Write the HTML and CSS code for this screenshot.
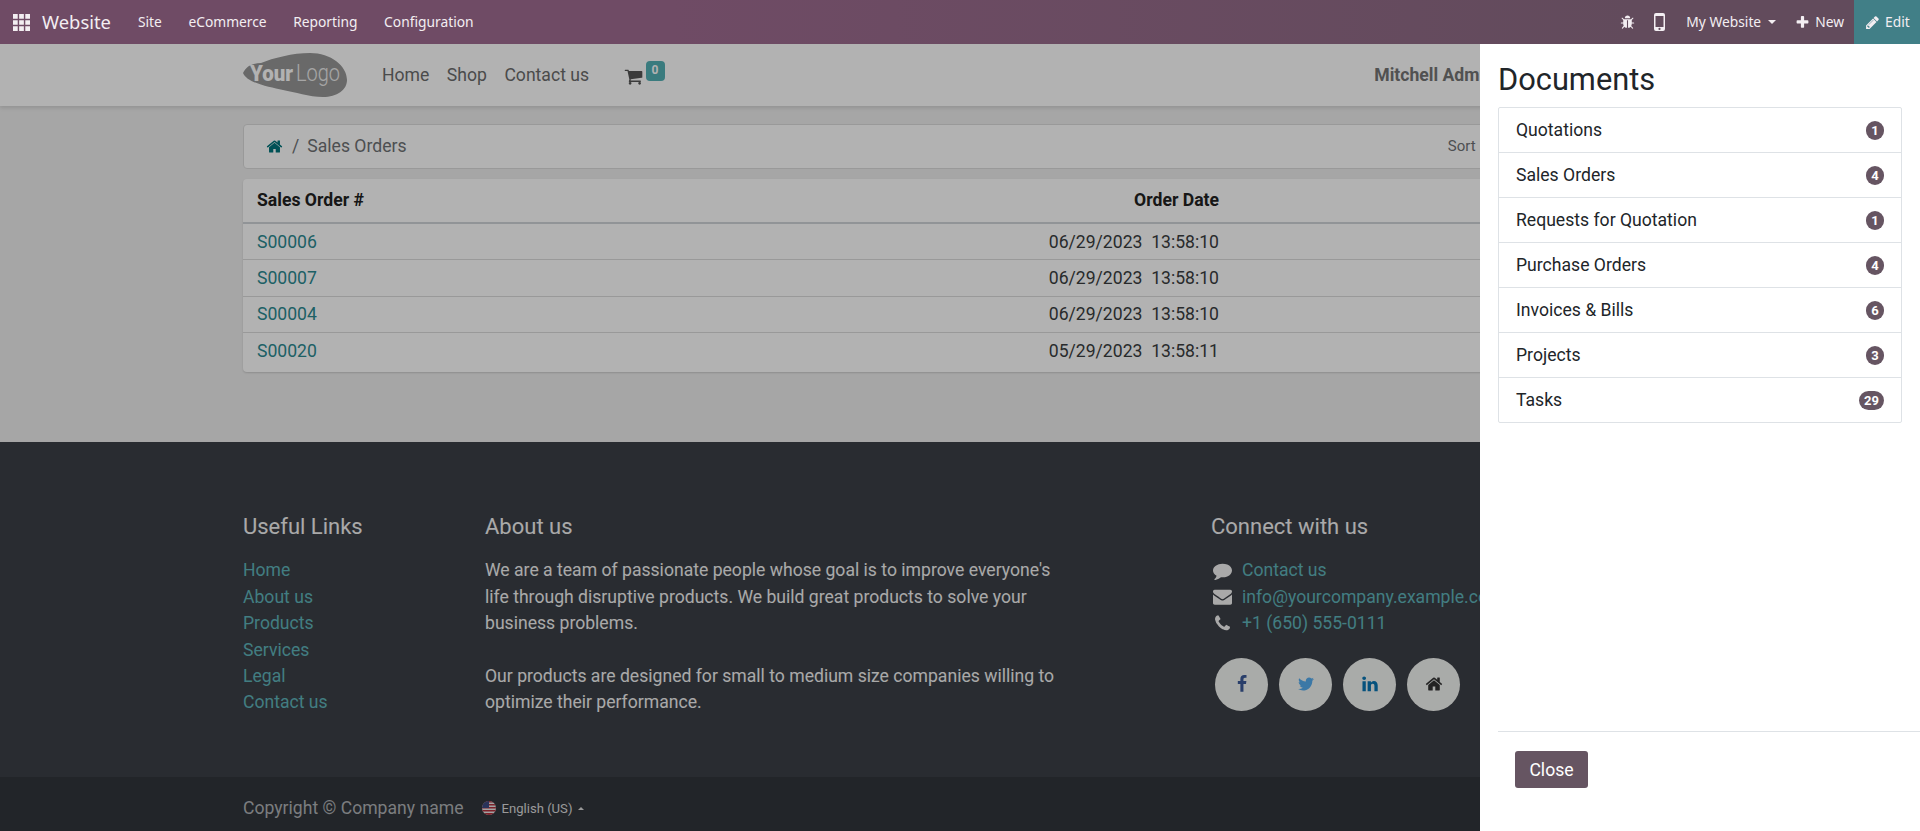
FILE: index.html
```html
<!DOCTYPE html>
<html lang="en">
<head>
    <meta charset="UTF-8">
    <meta name="viewport" content="width=device-width, initial-scale=1.0">
    <title>Sales Orders</title>
    <link rel="stylesheet" href="styles.css">
</head>
<body>
    <svg class="sprite" xmlns="http://www.w3.org/2000/svg">
        <symbol id="i-home" viewBox="0 0 1792 1792"><path d="M1472 992v480q0 26-19 45t-45 19h-384v-384h-256v384h-384q-26 0-45-19t-19-45v-480q0-1 .5-3t.5-3l575-474 575 474q1 2 1 6zm223-69l-62 74q-8 9-21 11h-3q-13 0-21-7l-692-577-692 577q-12 8-24 7-13-2-21-11l-62-74q-8-10-7-23.500t11-21.500l719-599q32-26 76-26t76 26l244 204v-195q0-14 9-23t23-9h192q14 0 23 9t9 23v408l219 182q10 8 11 21.500t-7 23.500z"/></symbol>
        <symbol id="i-cart" viewBox="0 0 1792 1792"><path d="M704 1536q0 52-38 90t-90 38-90-38-38-90 38-90 90-38 90 38 38 90zm896 0q0 52-38 90t-90 38-90-38-38-90 38-90 90-38 90 38 38 90zm128-1088v512q0 24-16.500 42.500t-40.500 21.500l-1044 122q13 60 13 70 0 16-24 64h920q26 0 45 19t19 45-19 45-45 19h-1024q-26 0-45-19t-19-45q0-11 8-31.500t16-36 21.500-40 15.500-29.500l-177-823h-204q-26 0-45-19t-19-45 19-45 45-19h256q16 0 28.500 6.500t19.500 15.500 13 24.500 8 26 5.500 29.500 4.500 26h1201q26 0 45 19t19 45z"/></symbol>
        <symbol id="i-comment" viewBox="0 0 1792 1792"><path d="M1792 896q0 174-120 321.500t-326 233-450 85.500q-70 0-145-8-198 175-460 242-49 14-114 22-17 2-30.500-9t-17.500-29v-1q-3-4-.5-12t2-10 4.500-9.500l6-9 7-8.500 8-9q7-8 31-34.500t34.500-38 31-39.500 32.500-51 27-59 26-76q-157-89-247.500-220t-90.500-281q0-130 71-248.500t191-204.500 286-136.500 348-50.500q244 0 450 85.500t326 233 120 321.500z"/></symbol>
        <symbol id="i-mail" viewBox="0 0 1792 1792"><path d="M1792 710v794q0 66-47 113t-113 47h-1472q-66 0-113-47t-47-113v-794q44 49 101 87 362 246 497 345 57 42 92.500 65.500t94.500 48 110 24.500h2q51 0 110-24.500t94.500-48 92.500-65.500q170-123 498-345 57-39 100-87zm0-294q0 79-49 151t-122 123q-376 261-468 325-10 7-42.500 30.500t-54 38-52 32.500-57.500 27-50 9h-2q-23 0-50-9t-57.500-27-52-32.500-54-38-42.500-30.500q-91-64-262-182.500t-205-142.500q-62-42-117-115.500t-55-136.500q0-78 41.500-130t118.500-52h1472q65 0 112.500 47t47.500 113z"/></symbol>
        <symbol id="i-phone" viewBox="0 0 1792 1792"><path d="M1600 1240q0 27-10 70.500t-21 68.500q-21 50-122 106-94 51-186 51-27 0-53-3.500t-57.500-12.500-47-14.500-55.500-20.500-49-18q-98-35-175-83-127-79-264-216t-216-264q-48-77-83-175-3-9-18-49t-20.500-55.500-14.500-47-12.500-57.500-3.500-53q0-92 51-186 56-101 106-122 25-11 68.500-21t70.500-10q14 0 21 3 18 6 53 76 11 19 30 54t35 63.500 31 53.500q3 4 17.500 25t21.500 35.500 7 28.500q0 20-28.500 50t-62 55-62 53-28.500 46q0 9 5 22.500t8.500 20.500 14 24 11.500 19q76 137 174 235t235 174q2 1 19 11.500t24 14 20.500 8.500 22.500 5q18 0 46-28.500t53-62 55-62 50-28.500q14 0 28.500 7t35.500 21.500 25 17.500q25 15 53.500 31t63.500 35 54 30q70 35 76 53 3 7 3 21z"/></symbol>
        <symbol id="i-fb" viewBox="0 0 1792 1792"><path d="M1343 12v264h-157q-86 0-116 36t-30 108v189h293l-39 296h-254v759h-306v-759h-255v-296h255v-218q0-186 104-288.500t277-102.500q147 0 228 12z"/></symbol>
        <symbol id="i-tw" viewBox="0 0 1792 1792"><path d="M1684 408q-67 98-162 167 1 14 1 42 0 130-38 259.500t-115.500 248.500-184.500 210.500-258 146-323 54.500q-271 0-496-145 35 4 78 4 225 0 401-138-105-2-188-64.500t-114-159.500q33 5 61 5 43 0 85-11-112-23-185.500-111.500t-73.500-205.500v-4q68 38 146 41-66-44-105-115t-39-154q0-88 44-163 121 149 294.500 238.500t371.500 99.500q-8-38-8-74 0-134 94.500-228.500t228.500-94.500q140 0 236 102 109-21 205-78-37 115-142 178 92-10 184-50z"/></symbol>
        <symbol id="i-in" viewBox="0 0 1792 1792"><path d="M477 625v991h-330v-991h330zm21-306q1 73-50.500 122t-135.500 49h-2q-82 0-132-49t-50-122q0-74 51.500-122.500t134.500-48.500 133 48.500 51 122.500zm1166 729v568h-329v-530q0-105-40.500-164.500t-126.500-59.500q-63 0-105.500 34.500t-63.500 85.500q-11 30-11 81v553h-329q2-399 2-647t-1-296l-1-48h329v144h-2q20-32 41-56t56.500-52 87-43.500 114.500-15.500q171 0 275 113.500t104 332.500z"/></symbol>
        <symbol id="i-pencil" viewBox="0 0 1792 1792"><path d="M491 1536l91-91-235-235-91 91v107h128v128h107zm523-928q0-22-22-22-10 0-17 7l-542 542q-7 7-7 17 0 22 22 22 10 0 17-7l542-542q7-7 7-17zm-54-192l416 416-832 832h-416v-416zm683 96q0 53-37 90l-166 166-416-416 166-165q36-38 90-38 53 0 91 38l235 234q37 39 37 91z"/></symbol>
        <symbol id="i-plus" viewBox="0 0 1792 1792"><path d="M1600 736v192q0 40-28 68t-68 28h-416v416q0 40-28 68t-68 28h-192q-40 0-68-28t-28-68v-416h-416q-40 0-68-28t-28-68v-192q0-40 28-68t68-28h416v-416q0-40 28-68t68-28h192q40 0 68 28t28 68v416h416q40 0 68 28t28 68z"/></symbol>
        <symbol id="i-bug" viewBox="0 0 1792 1792"><path d="M1696 960q0 26-19 45t-45 19h-224q0 171-67 290l208 209q19 19 19 45t-19 45q-18 19-45 19t-45-19l-198-197q-5 5-15 13t-42 28.500-65 36.500-82 29-97 13v-896h-128v896q-51 0-101.500-13.500t-87-33-66-39-43.500-32.500l-15-14-183 207q-20 21-48 21-24 0-43-16-19-18-20.500-44.500t15.500-46.500l202-227q-58-114-58-274h-224q-26 0-45-19t-19-45 19-45 45-19h224v-294l-173-173q-19-19-19-45t19-45 45-19 45 19l173 173h844l173-173q19-19 45-19t45 19 19 45-19 45l-173 173v294h224q26 0 45 19t19 45zm-480-576h-640q0-133 93.500-226.500t226.500-93.500 226.500 93.500 93.500 226.500z"/></symbol>
    </svg>

    <nav class="topbar">
        <div class="topbar-group">
            <svg class="apps" viewBox="0 0 18 18"><path d="M0 0h5v5H0zM6.500 0h5v5h-5zM13 0h5v5h-5zM0 6.500h5v5H0zM6.500 6.500h5v5h-5zM13 6.500h5v5h-5zM0 13h5v5H0zM6.500 13h5v5h-5zM13 13h5v5h-5z"/></svg>
            <span class="brand">Website</span>
            <a class="topbar-link">Site</a>
            <a class="topbar-link">eCommerce</a>
            <a class="topbar-link">Reporting</a>
            <a class="topbar-link">Configuration</a>
        </div>
        <div class="topbar-group">
            <svg class="bar-icon bug"><use href="#i-bug"/></svg>
            <svg class="mobile" viewBox="0 0 11 18"><path fill-rule="evenodd" d="M2 0h7a2 2 0 0 1 2 2v14a2 2 0 0 1-2 2H2a2 2 0 0 1-2-2V2a2 2 0 0 1 2-2zM1.500 3v11h8V3zM5.500 14.800a1.100 1.100 0 1 0 0 2.200 1.100 1.100 0 0 0 0-2.200z"/></svg>
            <span class="my-website">My Website<i class="caret"></i></span>
            <span class="new-btn"><svg class="bar-icon"><use href="#i-plus"/></svg>New</span>
            <span class="edit-btn"><svg class="bar-icon"><use href="#i-pencil"/></svg>Edit</span>
        </div>
    </nav>

    <div class="page">
        <header class="site-header">
            <div class="container header-row">
                <svg class="logo" viewBox="0 0 105 46">
                    <path d="M0 21C3 14 10 11 18 11 30 6 50 1 67 1c21 0 37 13 37 27 0 10-10 17-24 17-14 0-28-5-40-7C26 35 4 31 0 21z" fill="#979797"/>
                    <text x="7" y="29" textLength="43" lengthAdjust="spacingAndGlyphs" class="logo-your">Your</text>
                    <text x="53" y="29" textLength="44" lengthAdjust="spacingAndGlyphs" class="logo-logo">Logo</text>
                </svg>
                <a class="site-link">Home</a>
                <a class="site-link">Shop</a>
                <a class="site-link">Contact us</a>
                <span class="cart">
                    <svg><use href="#i-cart"/></svg>
                    <sup class="cart-count">0</sup>
                </span>
                <span class="user">Mitchell Admin</span>
            </div>
        </header>

        <main class="container content">
            <div class="breadcrumb">
                <svg class="crumb-home"><use href="#i-home"/></svg>
                <span class="crumb-sep">/</span>
                <span class="crumb-current">Sales Orders</span>
                <span class="sort">Sort By: Date</span>
            </div>
            <div class="orders">
                <div class="order-row order-head"><span>Sales Order #</span><span class="order-date">Order Date</span></div>
                <div class="order-row"><a>S00006</a><span class="order-date">06/29/2023&nbsp; 13:58:10</span></div>
                <div class="order-row"><a>S00007</a><span class="order-date">06/29/2023&nbsp; 13:58:10</span></div>
                <div class="order-row"><a>S00004</a><span class="order-date">06/29/2023&nbsp; 13:58:10</span></div>
                <div class="order-row"><a>S00020</a><span class="order-date">05/29/2023&nbsp; 13:58:11</span></div>
            </div>
        </main>

        <footer class="site-footer">
            <div class="container footer-cols">
                <div class="col-links">
                    <h5>Useful Links</h5>
                    <a>Home</a>
                    <a>About us</a>
                    <a>Products</a>
                    <a>Services</a>
                    <a>Legal</a>
                    <a>Contact us</a>
                </div>
                <div class="col-about">
                    <h5>About us</h5>
                    <p>We are a team of passionate people whose goal is to improve everyone's life through disruptive products. We build great products to solve your business problems.</p>
                    <p>Our products are designed for small to medium size companies willing to optimize their performance.</p>
                </div>
                <div class="col-connect">
                    <h5>Connect with us</h5>
                    <div class="contact-row"><svg><use href="#i-comment"/></svg><a>Contact us</a></div>
                    <div class="contact-row"><svg><use href="#i-mail"/></svg><a>info@yourcompany.example.com</a></div>
                    <div class="contact-row"><svg><use href="#i-phone"/></svg><a>+1 (650) 555-0111</a></div>
                    <div class="socials">
                        <span class="social fb"><svg><use href="#i-fb"/></svg></span>
                        <span class="social tw"><svg><use href="#i-tw"/></svg></span>
                        <span class="social li"><svg><use href="#i-in"/></svg></span>
                        <span class="social hm"><svg><use href="#i-home"/></svg></span>
                    </div>
                </div>
            </div>
            <div class="copyright">
                <div class="container copyright-row">
                    <span>Copyright © Company name</span>
                    <span class="lang">
                        <svg class="flag" viewBox="0 0 14 14">
                            <defs><clipPath id="flag-clip"><circle cx="7" cy="7" r="7"/></clipPath></defs>
                            <g clip-path="url(#flag-clip)">
                                <rect width="14" height="14" fill="#e8e8e8"/>
                                <path d="M0 0h14v1.500H0zM0 3h14v1.500H0zM0 6h14v1.500H0zM0 9h14v1.500H0zM0 12h14v2H0z" fill="#b0303c"/>
                                <rect width="7" height="7" fill="#3c4a80"/>
                            </g>
                        </svg>
                        English (US)<i class="caret-up"></i>
                    </span>
                </div>
            </div>
        </footer>
    </div>

    <div class="backdrop"></div>

    <aside class="offcanvas">
        <h2 class="offcanvas-title">Documents</h2>
        <ul class="doc-list">
            <li>Quotations<span class="badge">1</span></li>
            <li>Sales Orders<span class="badge">4</span></li>
            <li>Requests for Quotation<span class="badge">1</span></li>
            <li>Purchase Orders<span class="badge">4</span></li>
            <li>Invoices &amp; Bills<span class="badge">6</span></li>
            <li>Projects<span class="badge">3</span></li>
            <li>Tasks<span class="badge">29</span></li>
        </ul>
        <div class="offcanvas-footer">
            <button class="close-btn">Close</button>
        </div>
    </aside>
</body>
</html>
```

FILE: styles.css
```css
*, *::before, *::after {
    margin: 0;
    padding: 0;
    box-sizing: border-box;
}

body {
    font-family: Roboto, 'Liberation Sans', sans-serif;
    font-size: 17.6px;
    line-height: 1.5;
    background-color: #eeeeee;
    height: 100vh;
    overflow: hidden;
}

.sprite {
    display: none;
}

.container {
    width: 1434px;
    margin: 0 auto;
}

/* top bar */
.topbar {
    position: relative;
    z-index: 3;
    height: 44px;
    display: flex;
    justify-content: space-between;
    background: linear-gradient(90deg, #6f4b65 0%, #6f4b65 35%, #624b5c 85%, #624b5c 100%);
    color: #f3eef2;
    font-family: 'Noto Sans', sans-serif;
    font-size: 13.8px;
}

.topbar-group {
    display: flex;
    align-items: center;
}

.apps {
    width: 17px;
    height: 17px;
    margin-left: 13px;
    fill: #f3eef2;
}

.brand {
    font-size: 18.400px;
    margin-left: 12px;
    margin-right: 27px;
}

.topbar-link {
    margin-right: 26.500px;
}

.bar-icon {
    width: 15px;
    height: 15px;
    fill: currentColor;
}

.bug {
    width: 15px;
    height: 15px;
}

.mobile {
    width: 11px;
    height: 18px;
    margin-left: 19px;
    fill: #f3eef2;
}

.my-website {
    margin-left: 21px;
    display: flex;
    align-items: center;
}

.caret {
    margin-left: 7px;
    border-top: 4.500px solid currentColor;
    border-left: 4.500px solid transparent;
    border-right: 4.500px solid transparent;
}

.new-btn {
    margin-left: 19px;
    display: flex;
    align-items: center;
    gap: 5px;
}

.edit-btn {
    margin-left: 10px;
    width: 66px;
    height: 44px;
    padding-left: 11px;
    display: flex;
    align-items: center;
    gap: 5px;
    background-color: #417f87;
}

/* page under the backdrop */
.site-header {
    height: 62px;
    background-color: #fff;
    box-shadow: 0 2px 4px rgba(0, 0, 0, 0.12);
    position: relative;
}

.header-row {
    height: 62px;
    display: flex;
    align-items: center;
}

.logo {
    width: 105px;
    height: 46px;
    margin-right: 34px;
}

.logo-your {
    font-family: Roboto, sans-serif;
    font-size: 22px;
    font-weight: 900;
    fill: #fff;
}

.logo-logo {
    font-family: Roboto, sans-serif;
    font-size: 23px;
    font-weight: 300;
    fill: #eee;
}

.site-link {
    color: #6c6c6c;
    margin-right: 17.500px;
}

.cart {
    margin-left: 18px;
    position: relative;
    width: 40px;
    height: 30px;
    display: flex;
    align-items: center;
}

.cart svg {
    width: 19px;
    height: 19px;
    fill: #555;
    margin-top: 2px;
    margin-left: -1px;
}

.cart-count {
    position: absolute;
    left: 21px;
    top: 1px;
    width: 19px;
    height: 20px;
    border-radius: 4px;
    background-color: #53b0b5;
    color: #fff;
    font-size: 12px;
    font-weight: 700;
    line-height: 18px;
    text-align: center;
}

.user {
    margin-left: auto;
    margin-right: 183px;
    font-weight: 700;
    color: #757575;
}

.content {
    height: 336px;
    padding-top: 18px;
}

.breadcrumb {
    height: 45px;
    display: flex;
    align-items: center;
    background-color: #fff;
    border: 1px solid #dcdcdc;
    border-radius: 4px;
    padding-left: 22px;
    margin-bottom: 10px;
    color: #6f7275;
}

.crumb-home {
    width: 17px;
    height: 17px;
    fill: #01757b;
}

.crumb-sep {
    margin-left: 9px;
    margin-right: 8px;
}

.sort {
    margin-left: auto;
    margin-right: 130px;
    font-size: 15px;
    word-spacing: 6px;
}

.orders {
    background-color: #fff;
    border-radius: 4px;
    box-shadow: 0 1px 2px rgba(0, 0, 0, 0.15);
    color: #3a3d40;
    padding-bottom: 2px;
}

.order-row {
    height: 36.400px;
    padding: 0 14px;
    display: grid;
    grid-template-columns: 750px 212px;
    align-items: center;
    border-bottom: 1px solid #dcdcdc;
}

.order-row:last-child {
    border-bottom: none;
}

.order-row a {
    color: #2b8a91;
}

.order-date {
    text-align: right;
}

.order-head {
    height: 45px;
    font-weight: 700;
    color: #222;
    border-bottom: 2px solid #d0d4d8;
}

/* footer */
.site-footer {
    background-color: #3c4047;
    color: #f3f3f3;
    height: 389px;
    display: flex;
    flex-direction: column;
    justify-content: space-between;
}

.footer-cols {
    display: grid;
    grid-template-columns: 242px 726px 1fr;
    padding-top: 72px;
}

.site-footer h5 {
    font-size: 22px;
    font-weight: 400;
    line-height: 1.2;
    margin-bottom: 17px;
}

.col-links a {
    display: block;
    color: #5fb4ba;
}

.col-about p {
    width: 590px;
    margin-bottom: 26.400px;
}

.contact-row {
    display: flex;
    align-items: center;
    height: 26.400px;
}

.contact-row svg {
    width: 19px;
    height: 19px;
    fill: #f3f3f3;
    margin-left: 2px;
    margin-right: 10px;
}

.contact-row a {
    color: #5fb4ba;
    white-space: nowrap;
}

.socials {
    display: flex;
    gap: 11px;
    margin-top: 21px;
    margin-left: 4px;
}

.social {
    width: 53px;
    height: 53px;
    border-radius: 50%;
    background-color: #f3f5f3;
    display: flex;
    align-items: center;
    justify-content: center;
}

.social svg {
    width: 18px;
    height: 18px;
}

.fb { fill: #3b5998; }
.tw { fill: #55acee; }
.li { fill: #0976b4; }
.hm { fill: #333; }

.copyright {
    height: 54px;
    background-color: #32363c;
    color: #b0b3b6;
}

.copyright-row {
    height: 54px;
    padding-top: 9px;
    display: flex;
    align-items: center;
}

.lang {
    display: flex;
    align-items: center;
    margin-left: 18px;
    font-size: 13.100px;
    color: #dcdcdc;
}

.flag {
    width: 14px;
    height: 14px;
    margin-right: 6px;
}

.caret-up {
    margin-left: 6px;
    border-bottom: 3px solid currentColor;
    border-left: 3px solid transparent;
    border-right: 3px solid transparent;
}

/* overlay */
.backdrop {
    position: fixed;
    top: 44px;
    left: 0;
    right: 0;
    bottom: 0;
    background-color: rgba(0, 0, 0, 0.3);
    z-index: 1;
}

.offcanvas {
    position: fixed;
    top: 44px;
    right: 0;
    bottom: 0;
    width: 440px;
    background-color: #fff;
    z-index: 2;
    display: flex;
    flex-direction: column;
    color: #212529;
}

.offcanvas-title {
    font-size: 30.800px;
    font-weight: 400;
    line-height: 38px;
    margin: 17px 0 8px 18px;
}

.doc-list {
    list-style: none;
    margin: 0 18px;
    border: 1px solid #dee2e6;
    border-radius: 2px;
}

.doc-list li {
    height: 45px;
    padding: 0 17px;
    display: flex;
    align-items: center;
    justify-content: space-between;
    border-bottom: 1px solid #dee2e6;
}

.doc-list li:last-child {
    height: 44px;
    border-bottom: none;
}

.badge {
    min-width: 18px;
    height: 19px;
    padding: 0 5px;
    border-radius: 10px;
    background-color: #665562;
    color: #fff;
    font-size: 13px;
    font-weight: 700;
    line-height: 19px;
    text-align: center;
}

.offcanvas-footer {
    margin-top: auto;
    margin-left: 18px;
    height: 100px;
    padding: 19px 0 0 17px;
    border-top: 1px solid #dee2e6;
}

.close-btn {
    width: 73px;
    height: 37px;
    border: none;
    border-radius: 3px;
    background-color: #665562;
    color: #fff;
    font-family: Roboto, sans-serif;
    font-size: 17.6px;
}
```
